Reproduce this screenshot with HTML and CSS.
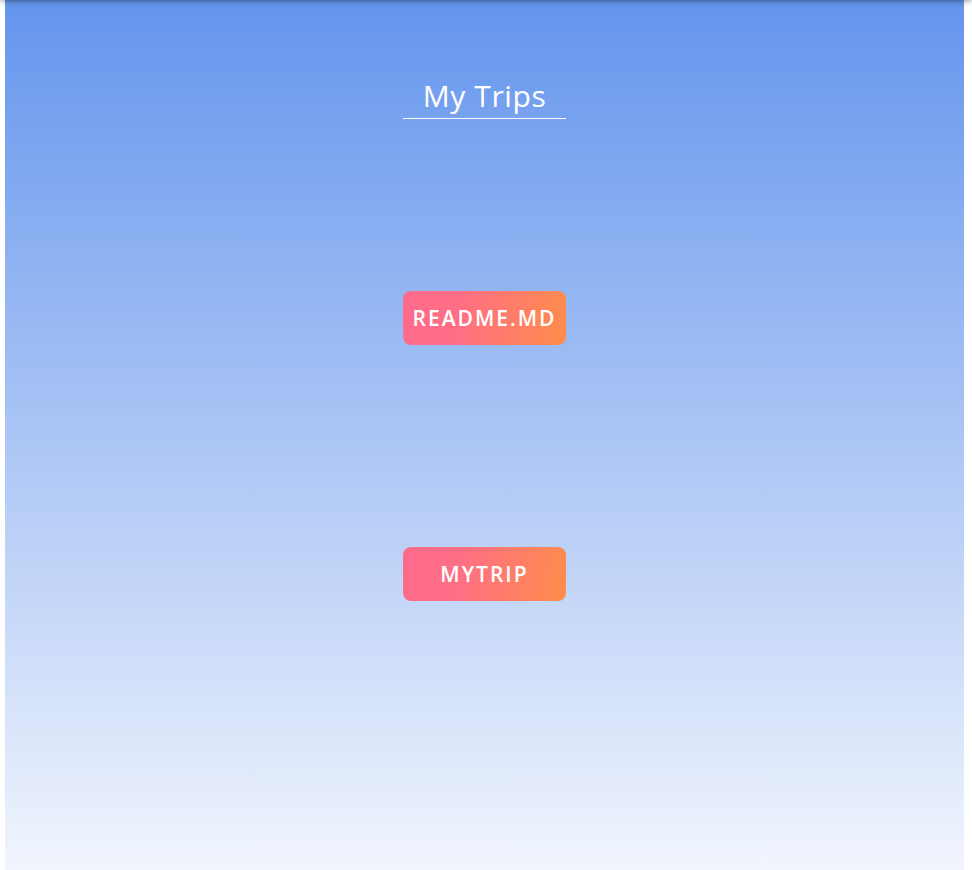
FILE: index.html
```html
<!DOCTYPE html>
<html>
<head>
<meta charset="utf-8">
<link rel="stylesheet" href="styles.css">
</head>
<body>
<div class="topshade"></div>
<main class="page">
  <h1 class="title">My Trips</h1>
  <div class="list">
    <button class="trip">README.MD</button>
    <button class="trip">MYTRIP</button>
  </div>
</main>
</body>
</html>
```
FILE: styles.css
```css
html, body {
  margin: 0;
  padding: 0;
  background: #ffffff;
  height: 100%;
  overflow: hidden;
}
body {
  font-family: "Open Sans", "Noto Sans", sans-serif;
  position: relative;
}
.topshade {
  position: absolute;
  left: 0;
  right: 0;
  top: -10px;
  height: 10px;
  box-shadow: 0 0 7px rgba(0, 0, 0, 0.55);
  z-index: 2;
}
.page {
  margin-left: 5px;
  width: 959px;
  height: 870px;
  background: linear-gradient(to bottom, #6495ed 0%, #f1f5fd 100%);
  display: flex;
  flex-direction: column;
  align-items: center;
}
.title {
  margin: 78px 0 0;
  width: 163px;
  text-align: center;
  color: #ffffff;
  font-weight: 400;
  font-size: 30px;
  line-height: 36px;
  letter-spacing: 0.6px;
  padding-bottom: 4px;
  border-bottom: 1px solid #ffffff;
}
.list {
  display: flex;
  flex-direction: column;
  align-items: center;
  gap: 202px;
  margin-top: 172px;
}
.trip {
  width: 163px;
  height: 54px;
  border: none;
  border-radius: 8px;
  background: linear-gradient(100deg, #ff6a8c 0%, #ff6f84 35%, #ff8d4b 100%);
  color: #ffffff;
  font-family: "Open Sans", "Noto Sans", sans-serif;
  font-size: 21px;
  font-weight: 600;
  letter-spacing: 2px;
  padding: 0;
}
```
